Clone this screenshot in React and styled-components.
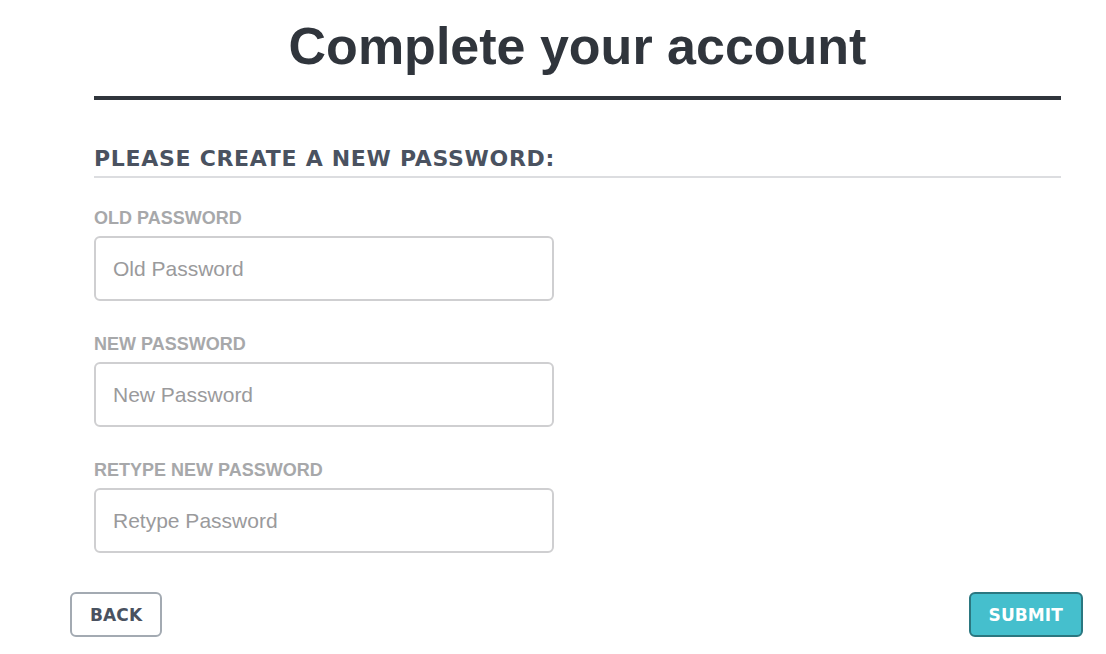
import React from 'react';
import styled, { createGlobalStyle } from 'styled-components';

const GlobalStyle = createGlobalStyle`
  html, body {
    margin: 0;
    padding: 0;
    background: #fff;
  }
  body {
    font-family: "Liberation Sans", Arial, sans-serif;
  }
`;

const Page = styled.div`
  width: 1106px;
  height: 654px;
  box-sizing: border-box;
  padding: 0 23px 0 70px;
  display: flex;
  flex-direction: column;
`;

const Content = styled.div`
  padding: 0 22px 0 24px;
`;

const Title = styled.h1`
  margin: 0;
  height: 100px;
  padding-top: 16px;
  box-sizing: border-box;
  text-align: center;
  font-family: "Liberation Sans", Arial, sans-serif;
  font-weight: 700;
  font-size: 52px;
  line-height: 60px;
  color: #30353c;
  border-bottom: 4px solid #30353c;
`;

const Section = styled.h2`
  margin: 46px 0 0;
  padding-bottom: 4px;
  font-family: "DejaVu Sans", Verdana, sans-serif;
  font-weight: 700;
  font-size: 22px;
  line-height: 26px;
  letter-spacing: 0.7px;
  color: #4a5260;
  border-bottom: 2px solid #dcdde0;
`;

const Fields = styled.div`
  display: flex;
  flex-direction: column;
  gap: 33px;
  margin-top: 30px;
`;

const Field = styled.label`
  display: flex;
  flex-direction: column;
  gap: 8px;
`;

const Label = styled.span`
  font-family: "Liberation Sans", Arial, sans-serif;
  font-weight: 700;
  font-size: 18px;
  line-height: 20px;
  color: #a7a8aa;
`;

const Input = styled.input`
  width: 460px;
  height: 65px;
  box-sizing: border-box;
  border: 2px solid #cfcfd1;
  border-radius: 6px;
  padding: 0 17px;
  font-family: "Liberation Sans", Arial, sans-serif;
  font-size: 21px;
  color: #333;
  outline: none;

  &::placeholder {
    color: #9a9a9c;
  }
`;

const Footer = styled.div`
  display: flex;
  justify-content: space-between;
  margin-top: 39px;
`;

const Button = styled.button`
  height: 45px;
  box-sizing: border-box;
  padding: 0 18px;
  border-radius: 6px;
  border: 2px solid ${p => (p.$primary ? '#2b7780' : '#a3aab2')};
  background: ${p => (p.$primary ? '#45bfcd' : '#fff')};
  color: ${p => (p.$primary ? '#fff' : '#4a5260')};
  font-family: "DejaVu Sans", Verdana, sans-serif;
  font-weight: 700;
  font-size: 17px;
  letter-spacing: 0.1px;
  cursor: pointer;
`;

const fields = [
  { label: 'OLD PASSWORD', placeholder: 'Old Password' },
  { label: 'NEW PASSWORD', placeholder: 'New Password' },
  { label: 'RETYPE NEW PASSWORD', placeholder: 'Retype Password' },
];

const App = () => (
  <>
    <GlobalStyle />
    <Page>
      <Content>
        <Title>Complete your account</Title>
        <Section>PLEASE CREATE A NEW PASSWORD:</Section>
        <Fields>
          {fields.map(f => (
            <Field key={f.label}>
              <Label>{f.label}</Label>
              <Input type="password" placeholder={f.placeholder} />
            </Field>
          ))}
        </Fields>
      </Content>
      <Footer>
        <Button type="button">BACK</Button>
        <Button type="submit" $primary>SUBMIT</Button>
      </Footer>
    </Page>
  </>
);

export default App;
